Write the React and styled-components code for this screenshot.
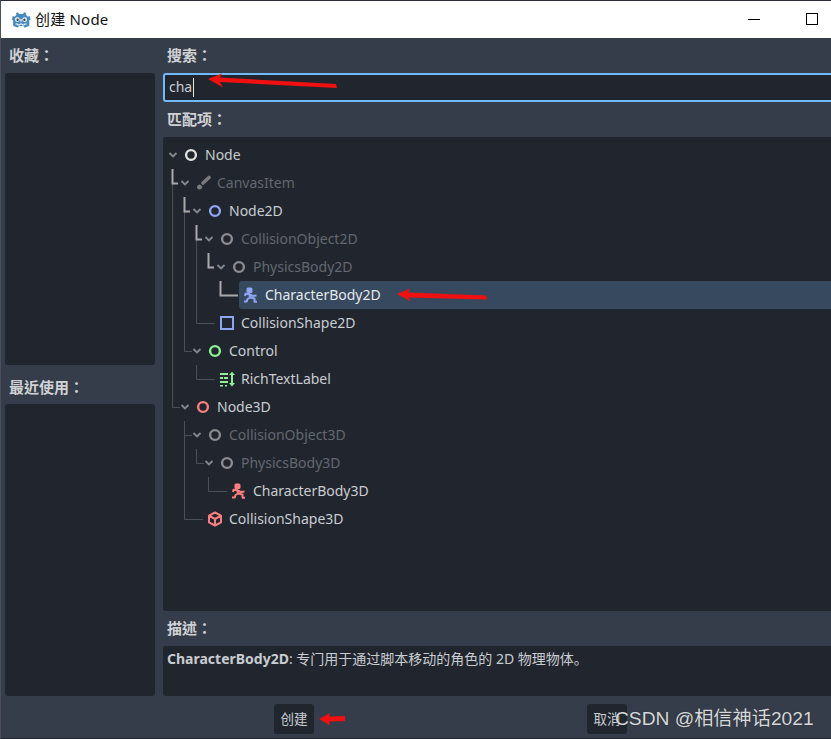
import React from 'react';
import styled, { createGlobalStyle } from 'styled-components';

const COLORS = {
  base: '#363d4a',
  dark: '#21262e',
  accent: '#70bafa',
  label: '#cfd1d4',
  text: '#c9ccd1',
  disabled: '#63676e',
  selected: '#37495f',
  guide: '#4b4f56',
  guideStrong: '#a8a9ac',
};

const FONT = '"Noto Sans", "Noto Sans CJK SC", sans-serif';

const GlobalStyle = createGlobalStyle`
  html, body {
    margin: 0;
    padding: 0;
    background: ${COLORS.base};
    overflow: hidden;
  }
`;

const Window = styled.div`
  position: relative;
  width: 831px;
  height: 739px;
  display: flex;
  flex-direction: column;
  overflow: hidden;
  box-sizing: border-box;
  border-top: 1px solid #2a2d33;
  border-left: 1px solid #4a4f59;
  border-bottom: 1px solid #23262c;
  background: ${COLORS.base};
  font-family: ${FONT};
  font-size: 14px;
  color: ${COLORS.text};
`;

const TitleBar = styled.div`
  height: 37px;
  flex: none;
  display: flex;
  align-items: center;
  background: #fff;
  color: #111;
  padding-left: 10px;
`;

const TitleText = styled.span`
  margin: -2px 0 0 4px;
  font-size: 15px;
  letter-spacing: 0.2px;
`;

const WindowButtons = styled.div`
  margin-left: auto;
  display: flex;
  align-items: center;
  gap: 46px;
  padding: 0 13px 1px 0;
`;

const MinimizeGlyph = styled.div`
  width: 12px;
  height: 1px;
  background: #000;
`;

const MaximizeGlyph = styled.div`
  width: 12px;
  height: 12px;
  box-sizing: border-box;
  border: 1px solid #000;
`;

const Body = styled.div`
  flex: 1;
  min-height: 0;
  display: flex;
  gap: 8px;
  padding-left: 4px;
`;

const Side = styled.div`
  width: 150px;
  flex: none;
  display: flex;
  flex-direction: column;
`;

const Main = styled.div`
  flex: 1;
  min-width: 0;
  display: flex;
  flex-direction: column;
`;

const SectionLabel = styled.div`
  height: ${(p) => p.$h}px;
  flex: none;
  box-sizing: border-box;
  display: flex;
  align-items: center;
  padding: ${(p) => p.$top || 0}px 0 3px 4px;
  color: ${COLORS.label};
  font-family: "Noto Sans", "Noto Sans CJK TC", sans-serif;
  font-weight: 700;
  font-size: 15px;
`;

const Panel = styled.div`
  height: ${(p) => p.$h}px;
  flex: none;
  background: ${COLORS.dark};
  border-radius: 3px;
`;

const SearchBox = styled.div`
  height: 29px;
  flex: none;
  box-sizing: border-box;
  margin-right: -20px;
  display: flex;
  align-items: center;
  padding: 0 0 2px 4px;
  background: ${COLORS.dark};
  border: 2px solid ${COLORS.accent};
  border-radius: 3px;
  color: ${COLORS.text};
`;

const Caret = styled.span`
  display: inline-block;
  width: 1px;
  height: 19px;
  margin: 2px 0 0 1px;
  background: #e4e6e8;
`;

const Tree = styled.div`
  position: relative;
  height: 474px;
  flex: none;
  box-sizing: border-box;
  margin-right: -20px;
  padding-top: 4px;
  background: ${COLORS.dark};
  border-radius: 3px;
  overflow: hidden;
`;

const Guides = styled.svg`
  position: absolute;
  left: 0;
  top: 0;
`;

const Row = styled.div`
  height: 28px;
  display: flex;
  align-items: center;
  padding-left: ${(p) => 3 + p.$depth * 12}px;
`;

const ArrowSlot = styled.div`
  width: 13px;
  flex: none;
  display: flex;
  align-items: center;
  justify-content: center;
`;

const Cell = styled.div`
  flex: 1;
  height: 28px;
  display: flex;
  align-items: center;
  gap: 6px;
  padding-left: 4px;
  border-radius: 3px 0 0 3px;
  background: ${(p) => (p.$selected ? COLORS.selected : 'transparent')};
  color: ${(p) => (p.$selected ? '#e6e8ea' : p.$disabled ? COLORS.disabled : COLORS.text)};
`;

const NodeName = styled.span`
  margin-top: -2px;
`;

const IconBox = styled.svg`
  width: 16px;
  height: 16px;
  flex: none;
  opacity: ${(p) => (p.$disabled ? 0.55 : 1)};
`;

const Description = styled.div`
  height: 50px;
  flex: none;
  box-sizing: border-box;
  margin-right: -20px;
  padding: 3px 4px;
  background: ${COLORS.dark};
  border-radius: 3px;
  line-height: 20px;
  font-size: 14px;
`;

const Bold = styled.b`
  font-weight: 700;
`;

const Footer = styled.div`
  height: 42px;
  flex: none;
  box-sizing: border-box;
  display: flex;
  gap: 273px;
  padding: 8px 0 0 273px;
`;

const DialogButton = styled.div`
  width: 40px;
  height: 30px;
  box-sizing: border-box;
  padding-bottom: 2px;
  display: flex;
  align-items: center;
  justify-content: center;
  background: ${COLORS.dark};
  border-radius: 3px;
  font-size: 13.5px;
`;

const Watermark = styled.div`
  position: absolute;
  left: 614px;
  top: 706px;
  font-family: "Liberation Sans", "Noto Sans CJK SC", sans-serif;
  font-size: 19.2px;
  line-height: 24px;
  color: #d6d8da;
  white-space: nowrap;
  text-shadow: 0 0 1px #22252b;
`;

const Overlay = styled.svg`
  position: absolute;
  left: -1px;
  top: -1px;
  pointer-events: none;
`;

const GodotLogo = () => (
  <svg width="20" height="18" viewBox="0 0 20 18" style={{ flex: 'none' }}>
    <path
      d="M7 1.2 8 3h4l1-1.800 2.300.8-.3 2 2 1.800 1.600-.8 1 3.500-1.300.8v5.200c-1 .9-3 1.800-5.300 2l-.3-1.500H7.700l-.3 1.500c-2.300-.2-4.300-1.100-5.300-2V9.300L.8 8.500l1-3.500 1.600.8L5.400 4l-.3-2z"
      fill="#478cbf"
    />
    <circle cx="6.300" cy="8.600" r="2.300" fill="#fff" />
    <circle cx="13.700" cy="8.600" r="2.300" fill="#fff" />
    <circle cx="6.600" cy="8.800" r="1.200" fill="#414042" />
    <circle cx="13.400" cy="8.800" r="1.200" fill="#414042" />
    <rect x="9.300" y="8.200" width="1.400" height="2.200" fill="#fff" />
    <path d="M4.500 13h2.200v1h2.100v-1h2.400v1h2.100v-1h2.200" fill="none" stroke="#fff" strokeWidth="1" />
  </svg>
);

const Chevron = () => (
  <svg width="10" height="8" viewBox="0 0 10 8">
    <path d="M1.500 2 5 5.500 8.500 2" fill="none" stroke="#85888e" strokeWidth="1.800" />
  </svg>
);

// 图标绘制，坐标都在 16x16 内
const Ring = ({ color, disabled }) => (
  <IconBox viewBox="0 0 16 16" $disabled={disabled}>
    <circle cx="8" cy="8" r="4.900" fill="none" stroke={color} strokeWidth="2.400" />
  </IconBox>
);

const Brush = ({ disabled }) => (
  <IconBox viewBox="0 0 16 16" $disabled={disabled}>
    <path d="M14 2.500 8 8" stroke="#c0c0c0" strokeWidth="3.600" strokeLinecap="round" />
    <path d="M5 9.500c-1.800 0-3 1.200-3 2.800 0 1.300 1 2.200 2.300 2.200 1.800 0 3-1.300 3-3z" fill="#c0c0c0" />
  </IconBox>
);

const Square = ({ color }) => (
  <IconBox viewBox="0 0 16 16">
    <rect x="2" y="2" width="12" height="12" fill="none" stroke={color} strokeWidth="2" />
  </IconBox>
);

const RichText = ({ color }) => (
  <IconBox viewBox="0 0 16 16">
    <g fill={color}>
      <rect x="1" y="2" width="8" height="2" />
      <rect x="1" y="6" width="3" height="2" />
      <rect x="5" y="6" width="4" height="2" />
      <rect x="1" y="10" width="8" height="2" />
      <rect x="1" y="14" width="3" height="1.500" />
      <rect x="6" y="14" width="2" height="1.500" />
      <rect x="12" y="3" width="2" height="10" />
      <path d="M13 .8 16 4h-6zM13 15.500 10 12h6z" />
    </g>
  </IconBox>
);

// 奔跑的小人：头在左上，右臂前伸，两腿分开
const Runner = ({ color }) => (
  <IconBox viewBox="0 0 16 16">
    <rect x="3.500" y="0.500" width="6" height="5.500" rx="1.500" fill={color} />
    <path
      d="M6 5.500 7 10.500M6.300 7 2.500 6.800 2 9M6.500 7.500 10 9 13.500 8.500M7 10.500 4.500 12 3.800 14.500 1 14.500M7 10.500 11.500 11.500 11.500 14.800 14 14.800"
      fill="none"
      stroke={color}
      strokeWidth="2"
      strokeLinejoin="round"
    />
  </IconBox>
);

const Cube = ({ color }) => (
  <IconBox viewBox="0 0 16 16">
    <path
      d="M8 1.500 14 4.700v6.600L8 14.500 2 11.300V4.700zM2 4.700 8 8l6-3.300M8 8v6.500"
      fill="none"
      stroke={color}
      strokeWidth="2"
      strokeLinejoin="round"
    />
  </IconBox>
);

const NODES = [
  { name: 'Node', depth: 0, arrow: true, icon: <Ring color="#e0e0e0" /> },
  { name: 'CanvasItem', depth: 1, arrow: true, disabled: true, icon: <Brush disabled /> },
  { name: 'Node2D', depth: 2, arrow: true, icon: <Ring color="#8da5f3" /> },
  { name: 'CollisionObject2D', depth: 3, arrow: true, disabled: true, icon: <Ring color="#e0e0e0" disabled /> },
  { name: 'PhysicsBody2D', depth: 4, arrow: true, disabled: true, icon: <Ring color="#e0e0e0" disabled /> },
  { name: 'CharacterBody2D', depth: 5, selected: true, icon: <Runner color="#8da5f3" /> },
  { name: 'CollisionShape2D', depth: 3, icon: <Square color="#8da5f3" /> },
  { name: 'Control', depth: 2, arrow: true, icon: <Ring color="#8eef97" /> },
  { name: 'RichTextLabel', depth: 3, icon: <RichText color="#8eef97" /> },
  { name: 'Node3D', depth: 1, arrow: true, icon: <Ring color="#fc7f7f" /> },
  { name: 'CollisionObject3D', depth: 2, arrow: true, disabled: true, icon: <Ring color="#e0e0e0" disabled /> },
  { name: 'PhysicsBody3D', depth: 3, arrow: true, disabled: true, icon: <Ring color="#e0e0e0" disabled /> },
  { name: 'CharacterBody3D', depth: 4, icon: <Runner color="#fc7f7f" /> },
  { name: 'CollisionShape3D', depth: 2, icon: <Cube color="#fc7f7f" /> },
];

// 树的连接线，用页面坐标
const STRONG_LINES = [
  'M172.500 169V183.500H178',
  'M184.500 197V211.500H190',
  'M196.500 225V239.500H202',
  'M208.500 253V267.500H214',
  'M220.500 281V295.500H238',
];

const THIN_LINES = [
  'M172.500 183V407.500H180',
  'M184.500 211V351.500H192',
  'M196.500 239V323.500H215',
  'M196.500 365V379.500H215',
  'M184.500 421V519.500H203',
  'M184.500 435.500H192',
  'M196.500 449V463.500H204',
  'M208.500 477V491.500H227',
];

const TreeGuides = () => (
  <Guides width="668" height="474" viewBox="163 137 668 474">
    <g fill="none" stroke={COLORS.guide} strokeWidth="1">
      {THIN_LINES.map((d) => (
        <path key={d} d={d} />
      ))}
    </g>
    <g fill="none" stroke={COLORS.guideStrong} strokeWidth="2">
      {STRONG_LINES.map((d) => (
        <path key={d} d={d} />
      ))}
    </g>
  </Guides>
);

const RedArrows = () => (
  <Overlay width="831" height="739" viewBox="0 0 831 739">
    <g fill="#f01010">
      <path d="M208 79 222 73.500 220 77.500 336 84 337 88 220 82 223 87.500z" />
      <path d="M397 294 410 288.500 408 292.500 486 295.500 487 299.500 408 297.500 411 301.500z" />
      <path d="M319 719 330 713 329 716.500 345 716 345 721 329 721.500 330 725.500z" />
    </g>
  </Overlay>
);

export default function App() {
  return (
    <>
      <GlobalStyle />
      <Window>
        <TitleBar>
          <GodotLogo />
          <TitleText>创建 Node</TitleText>
          <WindowButtons>
            <MinimizeGlyph />
            <MaximizeGlyph />
          </WindowButtons>
        </TitleBar>
        <Body>
          <Side>
            <SectionLabel $h={35}>收藏：</SectionLabel>
            <Panel $h={292} />
            <SectionLabel $h={39} $top={6}>最近使用：</SectionLabel>
            <Panel $h={292} />
          </Side>
          <Main>
            <SectionLabel $h={35}>搜索：</SectionLabel>
            <SearchBox>
              cha
              <Caret />
            </SearchBox>
            <SectionLabel $h={35}>匹配项：</SectionLabel>
            <Tree>
              <TreeGuides />
              {NODES.map((n) => (
                <Row key={n.name} $depth={n.depth}>
                  <ArrowSlot>{n.arrow && <Chevron />}</ArrowSlot>
                  <Cell $selected={n.selected} $disabled={n.disabled}>
                    {n.icon}
                    <NodeName>{n.name}</NodeName>
                  </Cell>
                </Row>
              ))}
            </Tree>
            <SectionLabel $h={35}>描述：</SectionLabel>
            <Description>
              <Bold>CharacterBody2D</Bold>: 专门用于通过脚本移动的角色的 2D 物理物体。
            </Description>
          </Main>
        </Body>
        <Footer>
          <DialogButton>创建</DialogButton>
          <DialogButton>取消</DialogButton>
        </Footer>
        <RedArrows />
        <Watermark>CSDN @相信神话2021</Watermark>
      </Window>
    </>
  );
}
